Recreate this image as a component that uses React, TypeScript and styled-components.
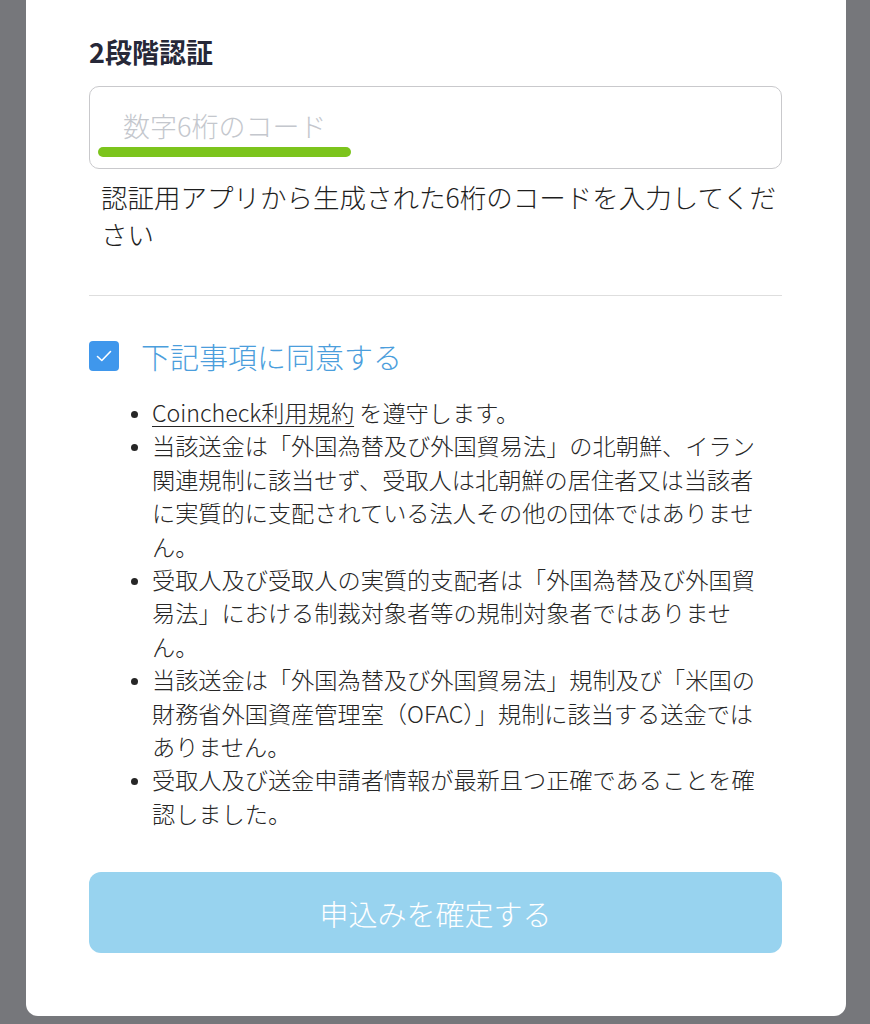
import React from "react";
import styled, { createGlobalStyle } from "styled-components";

const Global = createGlobalStyle`
  html, body {
    margin: 0;
    padding: 0;
    background: #76777b;
  }
  body {
    font-family: "Noto Sans CJK JP", "Noto Sans", sans-serif;
  }
  * { box-sizing: border-box; }
`;

const Card = styled.div`
  margin: 0 24px 0 26px;
  width: 820px;
  background: #ffffff;
  border-radius: 0 0 12px 12px;
  padding: 34px 64px 63px 63px;
  display: flex;
  flex-direction: column;
`;

const Title = styled.h2`
  margin: 0 0 16px;
  font-size: 27px;
  line-height: 36px;
  font-weight: 700;
  color: #262838;
`;

const InputWrap = styled.div`
  position: relative;
  height: 83px;
  border: 1px solid #c9c9cc;
  border-radius: 10px;
  display: flex;
  align-items: center;
`;

const CodeInput = styled.input`
  border: none;
  outline: none;
  background: transparent;
  width: 100%;
  height: 100%;
  padding: 0 0 4px 33px;
  font-family: "Noto Sans CJK JP", "Noto Sans", sans-serif;
  font-size: 27px;
  font-weight: 300;
  color: #333;
  &::placeholder {
    color: #c4c7cd;
  }
`;

const Highlight = styled.span`
  position: absolute;
  left: 8px;
  top: 60px;
  width: 253px;
  height: 10px;
  border-radius: 5px;
  background: #7cc41c;
`;

const Helper = styled.p`
  margin: 9px 0 0;
  padding-left: 12px;
  font-size: 26.5px;
  line-height: 37px;
  font-weight: 300;
  color: #1e1e1e;
`;

const Divider = styled.hr`
  margin: 43px 0 0;
  border: none;
  height: 1px;
  background: #dedede;
`;

const AgreeRow = styled.label`
  margin-top: 45px;
  display: flex;
  align-items: center;
  gap: 22px;
  height: 30px;
`;

const Box = styled.span`
  width: 30px;
  height: 30px;
  border-radius: 4px;
  background: #3f97ec;
  display: flex;
  align-items: center;
  justify-content: center;
  flex: none;
`;

const AgreeText = styled.span`
  font-size: 29px;
  line-height: 36px;
  font-weight: 300;
  color: #4b9edc;
`;

const Terms = styled.ul`
  margin: 25px 0 0;
  padding: 0 20px 0 63px;
  font-size: 23.2px;
  line-height: 33.4px;
  font-weight: 300;
  color: #262626;
`;

const Item = styled.li`
  &::marker {
    font-size: 18px;
  }
`;

const Link = styled.a`
  color: #262626;
  text-decoration: underline;
  text-underline-offset: 4px;
  text-decoration-thickness: 1px;
`;

const Submit = styled.button`
  margin-top: 42px;
  height: 81px;
  border: none;
  border-radius: 12px;
  background: #98d3ef;
  color: #ffffff;
  font-family: "Noto Sans CJK JP", "Noto Sans", sans-serif;
  font-size: 29px;
  font-weight: 300;
  cursor: pointer;
`;

export default function App() {
  return (
    <>
      <Global />
      <Card>
        <Title>2段階認証</Title>
        <InputWrap>
          <CodeInput placeholder="数字6桁のコード" />
          <Highlight />
        </InputWrap>
        <Helper>認証用アプリから生成された6桁のコードを入力してください</Helper>
        <Divider />
        <AgreeRow>
          <Box>
            <svg width="18" height="14" viewBox="0 0 18 14" fill="none">
              <path d="M2.5 7.5 L6.8 11.5 L15.5 2.5" stroke="#fff" strokeWidth="1.6" strokeLinecap="round" strokeLinejoin="round" />
            </svg>
          </Box>
          <AgreeText>下記事項に同意する</AgreeText>
        </AgreeRow>
        <Terms>
          <Item>
            <Link href="#">Coincheck利用規約</Link> を遵守します。
          </Item>
          <Item>
            当該送金は「外国為替及び外国貿易法」の北朝鮮、イラン関連規制に該当せず、受取人は北朝鮮の居住者又は当該者に実質的に支配されている法人その他の団体ではありません。
          </Item>
          <Item>
            受取人及び受取人の実質的支配者は「外国為替及び外国貿易法」における制裁対象者等の規制対象者ではありません。
          </Item>
          <Item>
            当該送金は「外国為替及び外国貿易法」規制及び「米国の財務省外国資産管理室（OFAC）」規制に該当する送金ではありません。
          </Item>
          <Item>受取人及び送金申請者情報が最新且つ正確であることを確認しました。</Item>
        </Terms>
        <Submit>申込みを確定する</Submit>
      </Card>
    </>
  );
}
